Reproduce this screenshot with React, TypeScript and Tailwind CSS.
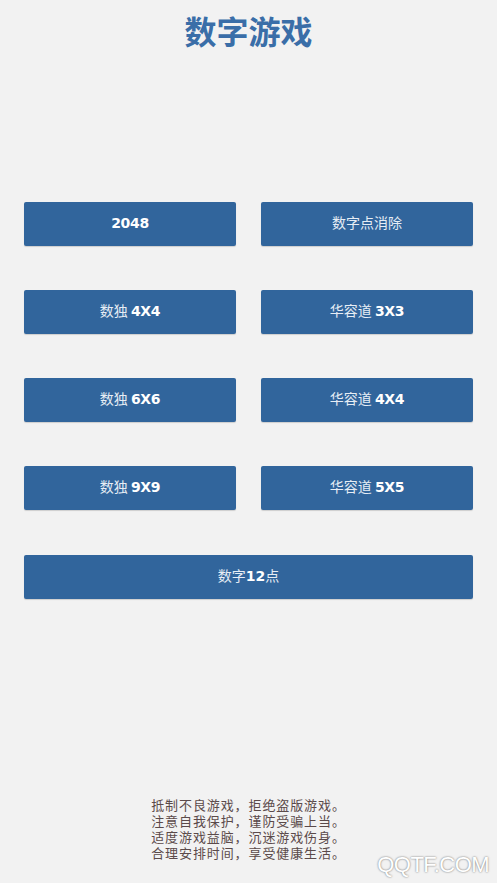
import React from 'react';

const cjk = { fontFamily: '"Noto Sans CJK SC", "Noto Sans", sans-serif' };

const GameButton = ({ cn, num }: { cn: string; num?: string }) => (
  <button className="h-[44px] w-full rounded-[2px] bg-[#31659c] pb-[3px] text-[14px] text-[#e6edf5] shadow-[0_1px_1px_rgba(0,0,0,0.15)]" style={cjk}>
    {cn}
    {num && <span className="font-black text-white tracking-tight" style={{ fontFamily: '"DejaVu Sans", sans-serif' }}>{num}</span>}
  </button>
);

const App = () => {
  const notices = [
    '抵制不良游戏，拒绝盗版游戏。',
    '注意自我保护，谨防受骗上当。',
    '适度游戏益脑，沉迷游戏伤身。',
    '合理安排时间，享受健康生活。',
  ];

  return (
    <div className="relative flex h-[883px] w-[497px] flex-col bg-[#f2f2f2]" style={cjk}>
      <h1 className="pt-[8px] text-center text-[32px] font-bold leading-[44px] text-[#3a6ea8]">数字游戏</h1>

      <div className="mt-[150px] grid grid-cols-2 gap-x-[25px] gap-y-[44px] px-[24px]">
        <GameButton cn="" num="2048" />
        <GameButton cn="数字点消除" />
        <GameButton cn="数独 " num="4X4" />
        <GameButton cn="华容道 " num="3X3" />
        <GameButton cn="数独 " num="6X6" />
        <GameButton cn="华容道 " num="4X4" />
        <GameButton cn="数独 " num="9X9" />
        <GameButton cn="华容道 " num="5X5" />
        <div className="col-span-2 mt-[1px]">
          <button className="h-[44px] w-full rounded-[2px] bg-[#31659c] pb-[3px] text-[14px] text-[#e6edf5] shadow-[0_1px_1px_rgba(0,0,0,0.15)]">
            数字<span className="font-black text-white" style={{ fontFamily: '"DejaVu Sans", sans-serif' }}>12</span>点
          </button>
        </div>
      </div>

      <div className="mt-auto mb-[22px] flex flex-col items-center text-[13px] leading-[16px] tracking-[0.9px] text-[#5b4a4a]">
        {notices.map((n) => (
          <p key={n}>{n}</p>
        ))}
      </div>

      <div className="absolute bottom-[2px] right-[8px] text-[22px] tracking-tight text-white [text-shadow:0_0_2px_rgba(0,0,0,0.6)]" style={{ fontFamily: '"Liberation Sans", sans-serif' }}>
        QQTF.COM
      </div>
    </div>
  );
};

export default App;
